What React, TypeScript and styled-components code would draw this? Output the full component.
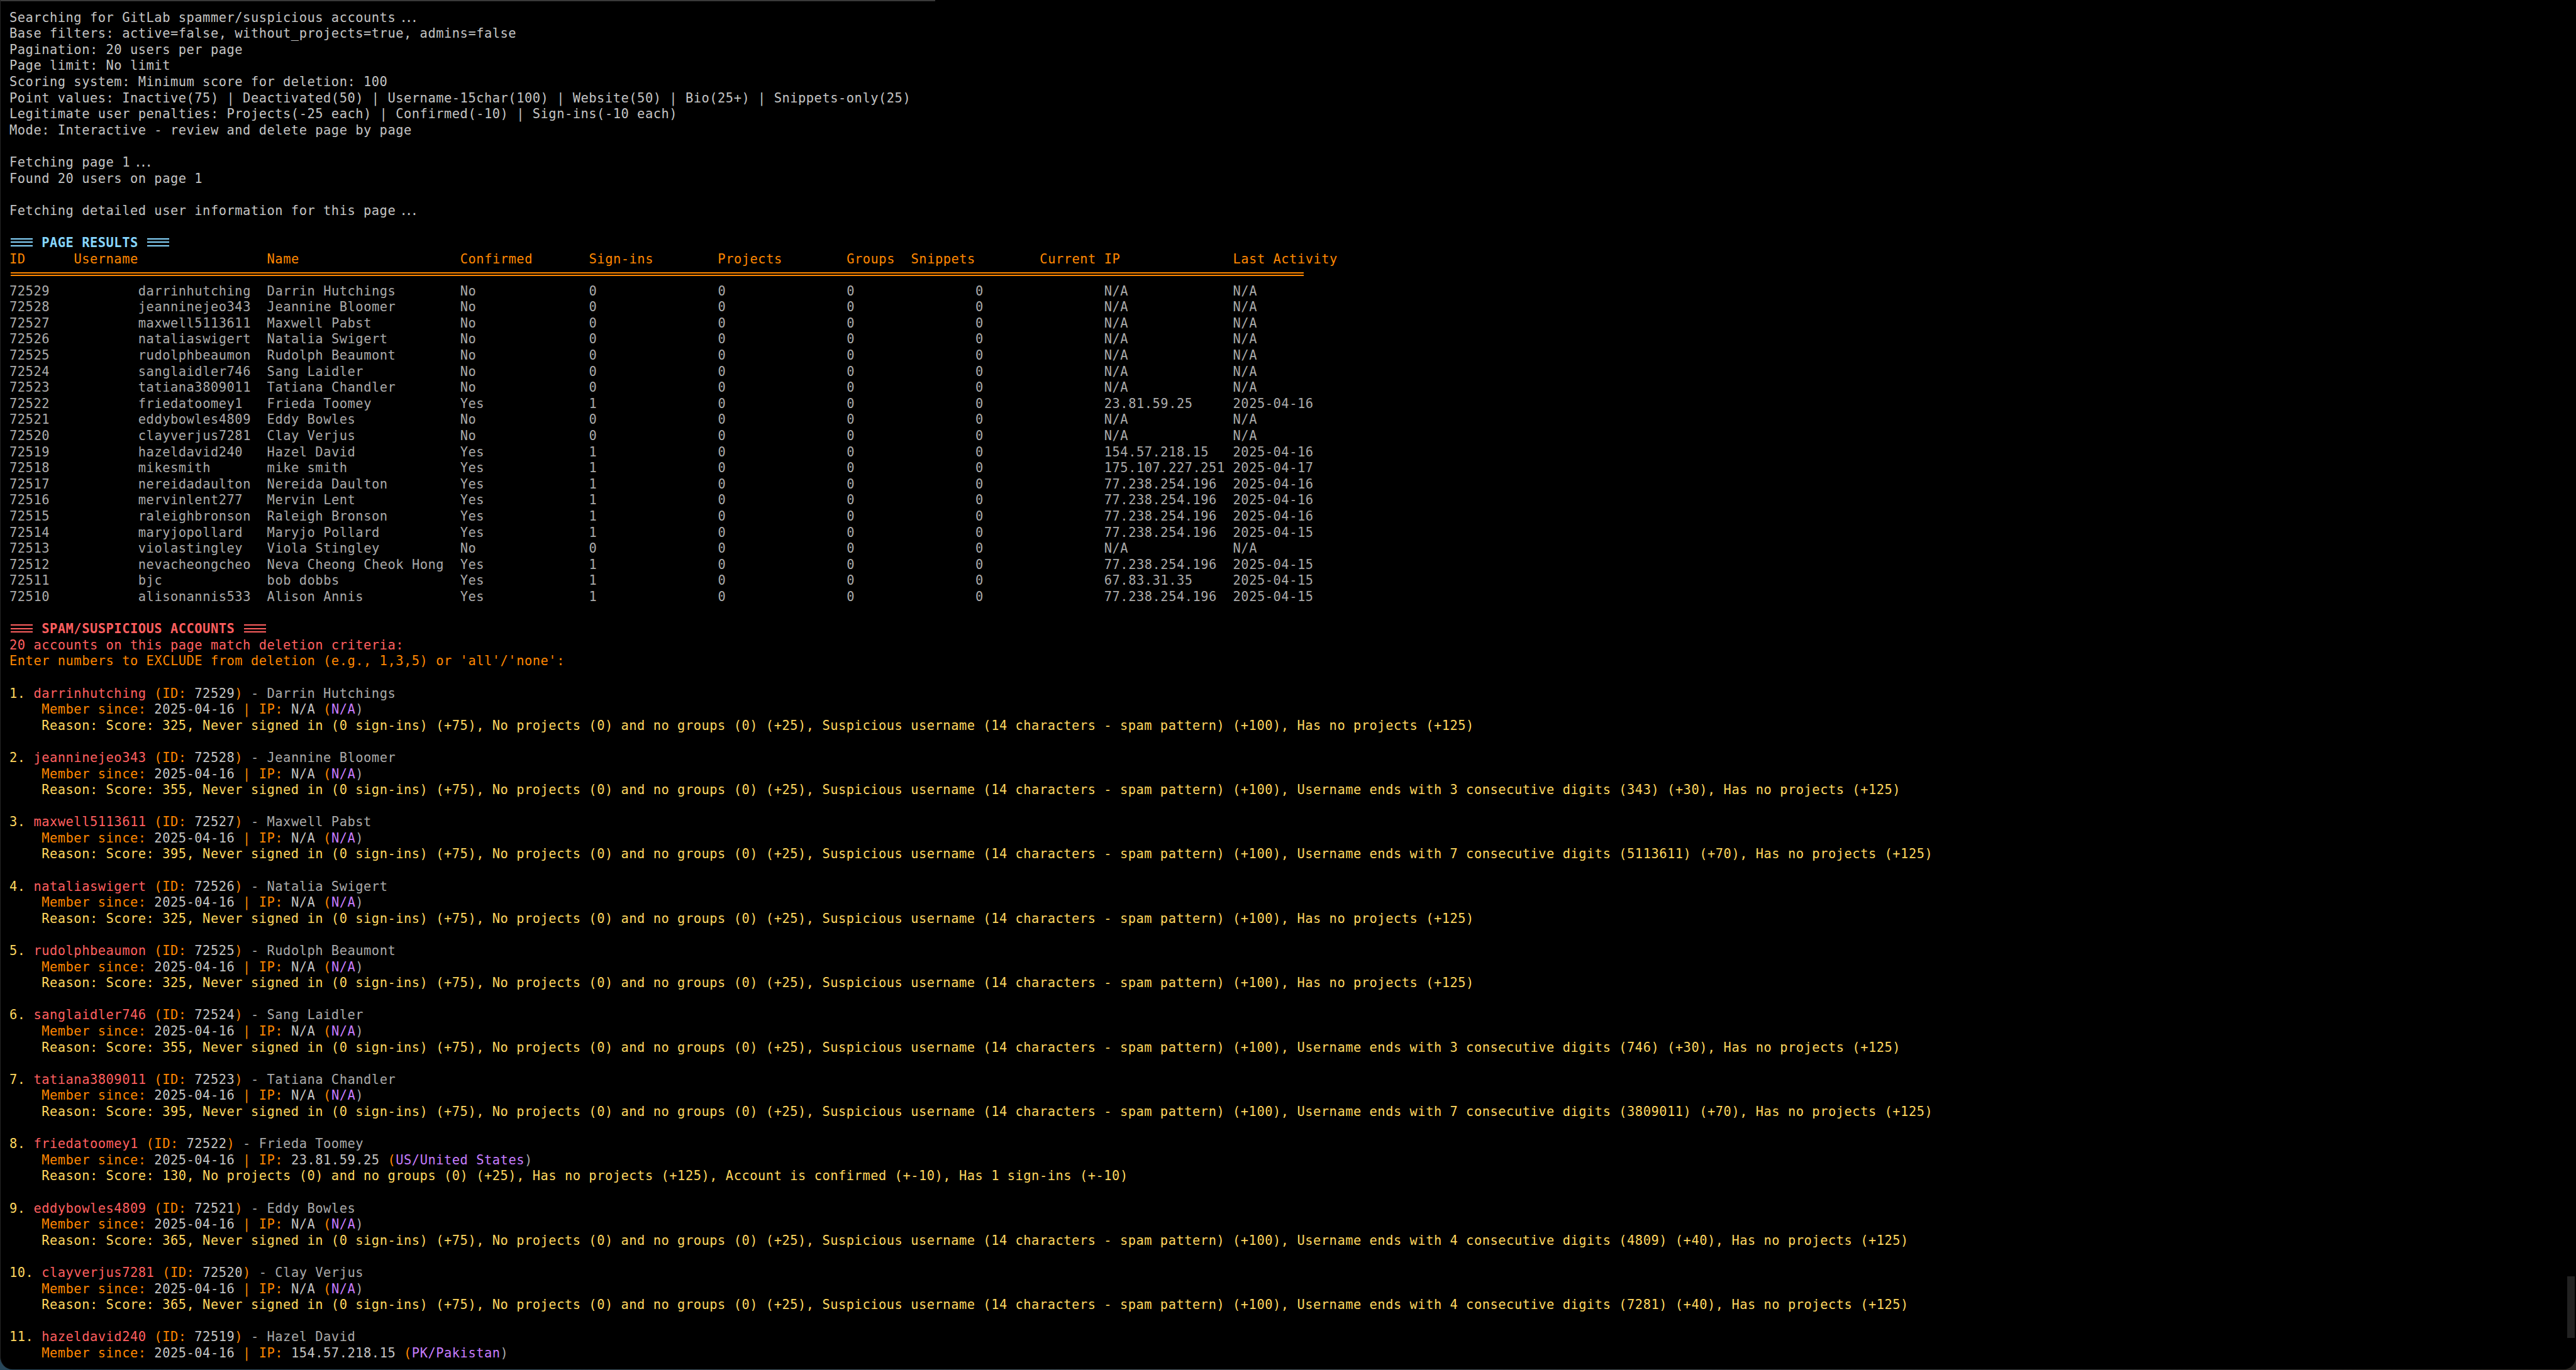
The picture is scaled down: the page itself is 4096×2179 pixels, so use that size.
import React from "react";
import styled, { createGlobalStyle } from "styled-components";

const CELL = 12.8;
const LINE = 25.6;
const cols = (...widths: number[]) => widths.map((w) => `${w * CELL}px`).join(" ");

const colors = {
  text: "#c4c4c4",
  dim: "#aaaaaa",
  orange: "#ff8700",
  red: "#ff5f5f",
  yellow: "#ffd75f",
  cyan: "#87d7ff",
  purple: "#c77dff",
};

const intro = [
  "Base filters: active=false, without_projects=true, admins=false",
  "Pagination: 20 users per page",
  "Page limit: No limit",
  "Scoring system: Minimum score for deletion: 100",
  "Point values: Inactive(75) | Deactivated(50) | Username-15char(100) | Website(50) | Bio(25+) | Snippets-only(25)",
  "Legitimate user penalties: Projects(-25 each) | Confirmed(-10) | Sign-ins(-10 each)",
  "Mode: Interactive - review and delete page by page",
];

const headers = ["ID", "Username", "Name", "Confirmed", "Sign-ins", "Projects", "Groups", "Snippets", "Current IP", "Last Activity"];

const users = [
  ["72529", "darrinhutching", "Darrin Hutchings", "No", "0", "N/A", "N/A"],
  ["72528", "jeanninejeo343", "Jeannine Bloomer", "No", "0", "N/A", "N/A"],
  ["72527", "maxwell5113611", "Maxwell Pabst", "No", "0", "N/A", "N/A"],
  ["72526", "nataliaswigert", "Natalia Swigert", "No", "0", "N/A", "N/A"],
  ["72525", "rudolphbeaumon", "Rudolph Beaumont", "No", "0", "N/A", "N/A"],
  ["72524", "sanglaidler746", "Sang Laidler", "No", "0", "N/A", "N/A"],
  ["72523", "tatiana3809011", "Tatiana Chandler", "No", "0", "N/A", "N/A"],
  ["72522", "friedatoomey1", "Frieda Toomey", "Yes", "1", "23.81.59.25", "2025-04-16"],
  ["72521", "eddybowles4809", "Eddy Bowles", "No", "0", "N/A", "N/A"],
  ["72520", "clayverjus7281", "Clay Verjus", "No", "0", "N/A", "N/A"],
  ["72519", "hazeldavid240", "Hazel David", "Yes", "1", "154.57.218.15", "2025-04-16"],
  ["72518", "mikesmith", "mike smith", "Yes", "1", "175.107.227.251", "2025-04-17"],
  ["72517", "nereidadaulton", "Nereida Daulton", "Yes", "1", "77.238.254.196", "2025-04-16"],
  ["72516", "mervinlent277", "Mervin Lent", "Yes", "1", "77.238.254.196", "2025-04-16"],
  ["72515", "raleighbronson", "Raleigh Bronson", "Yes", "1", "77.238.254.196", "2025-04-16"],
  ["72514", "maryjopollard", "Maryjo Pollard", "Yes", "1", "77.238.254.196", "2025-04-15"],
  ["72513", "violastingley", "Viola Stingley", "No", "0", "N/A", "N/A"],
  ["72512", "nevacheongcheo", "Neva Cheong Cheok Hong", "Yes", "1", "77.238.254.196", "2025-04-15"],
  ["72511", "bjc", "bob dobbs", "Yes", "1", "67.83.31.35", "2025-04-15"],
  ["72510", "alisonannis533", "Alison Annis", "Yes", "1", "77.238.254.196", "2025-04-15"],
];

const digits = (count: number, value: string) =>
  `Username ends with ${count} consecutive digits (${value}) (+${count * 10}), `;

const spamReason = (score: number, extra = "") =>
  `Score: ${score}, Never signed in (0 sign-ins) (+75), No projects (0) and no groups (0) (+25), Suspicious username (14 characters - spam pattern) (+100), ${extra}Has no projects (+125)`;

const accounts = [
  { ip: "N/A", place: "N/A", reason: spamReason(325) },
  { ip: "N/A", place: "N/A", reason: spamReason(355, digits(3, "343")) },
  { ip: "N/A", place: "N/A", reason: spamReason(395, digits(7, "5113611")) },
  { ip: "N/A", place: "N/A", reason: spamReason(325) },
  { ip: "N/A", place: "N/A", reason: spamReason(325) },
  { ip: "N/A", place: "N/A", reason: spamReason(355, digits(3, "746")) },
  { ip: "N/A", place: "N/A", reason: spamReason(395, digits(7, "3809011")) },
  {
    ip: "23.81.59.25",
    place: "US/United States",
    reason:
      "Score: 130, No projects (0) and no groups (0) (+25), Has no projects (+125), Account is confirmed (+-10), Has 1 sign-ins (+-10)",
  },
  { ip: "N/A", place: "N/A", reason: spamReason(365, digits(4, "4809")) },
  { ip: "N/A", place: "N/A", reason: spamReason(365, digits(4, "7281")) },
  { ip: "154.57.218.15", place: "PK/Pakistan", reason: "" },
];

const GlobalStyle = createGlobalStyle`
  html, body {
    margin: 0;
    height: 100%;
    overflow: hidden;
    background: linear-gradient(90deg, #27475a 0%, #4c5a63 45%, #2a2622 100%);
  }
`;

const Window = styled.main`
  position: relative;
  box-sizing: border-box;
  height: calc(100vh - 1px);
  overflow: hidden;
  background: #000;
  border-left: 1px solid #262626;
  border-radius: 0 0 20px 20px;
  font-family: "DejaVu Sans Mono", "Liberation Mono", monospace;
  font-size: 20.4px;
  letter-spacing: 0.52px;
  line-height: ${LINE}px;
  color: ${colors.text};
`;

const TopEdge = styled.div`
  width: 1486px;
  height: 2px;
  background: #3a3a3a;
`;

const Terminal = styled.div`
  display: flex;
  flex-direction: column;
  padding: 13.6px 0 0 14px;
`;

const Line = styled.div<{ $color?: string; $indent?: number; $gap?: number; $bold?: boolean }>`
  height: ${LINE}px;
  white-space: pre;
  color: ${(p) => p.$color ?? "inherit"};
  font-weight: ${(p) => (p.$bold ? 700 : 400)};
  margin-left: ${(p) => (p.$indent ?? 0) * CELL}px;
  margin-top: ${(p) => (p.$gap ?? 0) * LINE}px;
`;

const Dots = styled.span`
  display: inline-block;
  width: ${CELL * 3}px;
  text-align: center;
  letter-spacing: -3.6px;
`;

const Ligature = styled.span<{ $color: string }>`
  display: inline-block;
  width: ${CELL * 3}px;
  height: ${LINE}px;
  vertical-align: top;
  color: transparent;
  background:
    linear-gradient(${(p) => p.$color}, ${(p) => p.$color}) 1.6px 5px / 35.2px 2px no-repeat,
    linear-gradient(${(p) => p.$color}, ${(p) => p.$color}) 1.6px 10.4px / 35.2px 2px no-repeat,
    linear-gradient(${(p) => p.$color}, ${(p) => p.$color}) 1.6px 15.6px / 35.2px 2px no-repeat;
`;

const TableRow = styled.div<{ $head?: boolean }>`
  display: grid;
  height: ${LINE}px;
  white-space: pre;
  color: ${(p) => (p.$head ? colors.orange : colors.dim)};
  grid-template-columns: ${(p) =>
    p.$head ? cols(8, 24, 24, 16, 16, 16, 8, 16, 24, 20) : cols(16, 16, 24, 16, 16, 16, 16, 16, 16, 20)};
`;

const DoubleRule = styled.div`
  width: 2056px;
  height: ${LINE}px;
  margin-left: 1.8px;
  box-sizing: border-box;
  padding-top: 8.3px;

  &::before {
    content: "";
    display: block;
    height: 2px;
    border-top: 2px solid ${colors.orange};
    border-bottom: 2px solid ${colors.orange};
  }
`;

const Account = styled.article`
  display: flex;
  flex-direction: column;
  margin-top: ${LINE}px;
`;

const Tone = styled.span<{ $color: string }>`
  color: ${(p) => p.$color};
`;

const Scrollbar = styled.div`
  position: absolute;
  top: 2030px;
  right: 1.6px;
  width: 12.8px;
  height: 98px;
  background: #222222;
`;

const Heading = ({ color, title, gap }: { color: string; title: string; gap: number }) => (
  <Line $color={color} $gap={gap} $bold>
    <Ligature $color={color}>===</Ligature> {title} <Ligature $color={color}>===</Ligature>
  </Line>
);

export default function App() {
  return (
    <>
      <GlobalStyle />
      <Window>
        <TopEdge />
        <Terminal>
          <Line>Searching for GitLab spammer/suspicious accounts<Dots>...</Dots></Line>
          {intro.map((text) => (
            <Line key={text}>{text}</Line>
          ))}
          <Line $gap={1}>Fetching page 1<Dots>...</Dots></Line>
          <Line>Found 20 users on page 1</Line>
          <Line $gap={1}>Fetching detailed user information for this page<Dots>...</Dots></Line>

          <Heading color={colors.cyan} title="PAGE RESULTS" gap={1} />
          <TableRow $head>
            {headers.map((h) => (
              <span key={h}>{h}</span>
            ))}
          </TableRow>
          <DoubleRule />
          {users.map(([id, username, name, confirmed, signIns, ip, last]) => (
            <TableRow key={id}>
              <span>{id}</span>
              <span>{username}</span>
              <span>{name}</span>
              <span>{confirmed}</span>
              <span>{signIns}</span>
              <span>0</span>
              <span>0</span>
              <span>0</span>
              <span>{ip}</span>
              <span>{last}</span>
            </TableRow>
          ))}

          <Heading color={colors.red} title="SPAM/SUSPICIOUS ACCOUNTS" gap={1} />
          <Line $color={colors.red}>20 accounts on this page match deletion criteria:</Line>
          <Line $color={colors.orange}>
            Enter numbers to EXCLUDE from deletion (e.g., 1,3,5) or 'all'/'none':
          </Line>

          {accounts.map((account, i) => {
            const [id, username, name] = users[i];
            return (
              <Account key={id}>
                <Line>
                  <Tone $color={colors.yellow}>{i + 1}. </Tone>
                  <Tone $color={colors.red}>{username}</Tone>
                  <Tone $color={colors.orange}> (ID: </Tone>
                  <Tone $color={colors.text}>{id}</Tone>
                  <Tone $color={colors.orange}>)</Tone>
                  <Tone $color={colors.dim}> - {name}</Tone>
                </Line>
                <Line $indent={4} $color={colors.orange}>
                  Member since: <Tone $color={colors.text}>2025-04-16</Tone> | IP:{" "}
                  <Tone $color={colors.text}>{account.ip}</Tone> (
                  <Tone $color={colors.purple}>{account.place}</Tone>
                  <Tone $color={colors.dim}>)</Tone>
                </Line>
                {account.reason && (
                  <Line $indent={4} $color={colors.yellow}>
                    Reason: {account.reason}
                  </Line>
                )}
              </Account>
            );
          })}
        </Terminal>
        <Scrollbar />
      </Window>
    </>
  );
}
